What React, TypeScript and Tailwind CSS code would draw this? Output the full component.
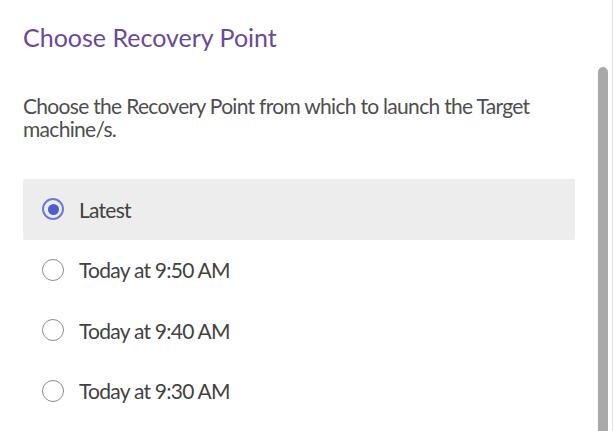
import React from "react";

const options = [
  { label: "Latest", selected: true },
  { label: "Today at 9:50 AM", selected: false },
  { label: "Today at 9:40 AM", selected: false },
  { label: "Today at 9:30 AM", selected: false },
];

function Radio({ selected }: { selected: boolean }) {
  return selected ? (
    <span className="flex h-[22px] w-[22px] shrink-0 items-center justify-center rounded-full border-2 border-[#6b7bd6]">
      <span className="h-[11px] w-[11px] rounded-full bg-[#4f5fc9]" />
    </span>
  ) : (
    <span className="h-[22px] w-[22px] shrink-0 rounded-full border-[1.5px] border-[#8c8c8c]" />
  );
}

export default function App() {
  return (
    <div className="flex h-[431px] w-[616px] bg-white font-['Lato','Noto_Sans',sans-serif]">
      <div className="flex h-full w-[613px] border-r border-[#e2e2e2]">
        <div className="flex-1 pl-[23px] pr-[23px]">
          <h1 className="mt-[22px] text-[25px] leading-[30px] text-[#6a4a98]">Choose Recovery Point</h1>
          <p className="mt-[42px] text-[21px] leading-[23px] text-[#4e4e4e] tracking-[-0.7px]">
            Choose the Recovery Point from which to launch the Target machine/s.
          </p>
          <div className="mt-[39px] flex flex-col">
            {options.map((o) => (
              <div
                key={o.label}
                className={`flex h-[60.5px] items-center gap-[15px] rounded-[2px] pl-[19px] ${o.selected ? "bg-[#ededed]" : ""}`}
              >
                <Radio selected={o.selected} />
                <span className="text-[21px] leading-[25px] text-[#424242] tracking-[-0.75px]">{o.label}</span>
              </div>
            ))}
          </div>
        </div>
        <div className="flex w-[14px] shrink-0 flex-col pt-[67px] pr-[4px]">
          <div className="flex-1 rounded-t-[5px] bg-[#a9a9a9]" />
        </div>
      </div>
    </div>
  );
}
